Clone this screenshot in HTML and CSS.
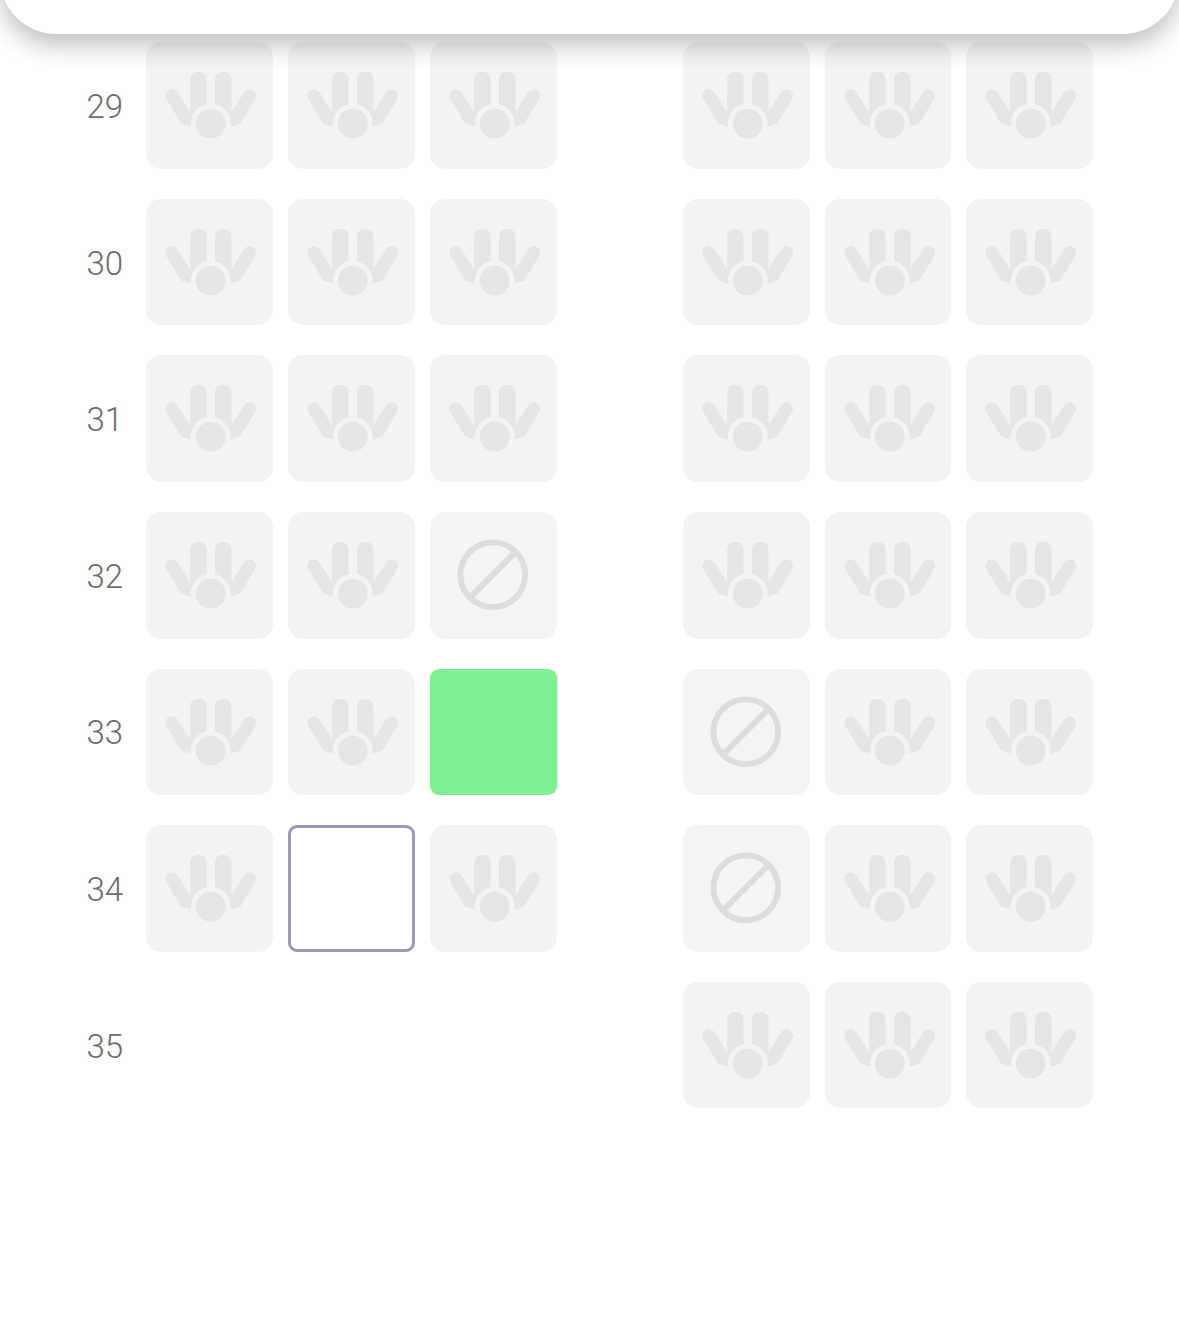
FILE: index.html
```html
<!DOCTYPE html>
<html lang="en">
<head>
    <meta charset="UTF-8">
    <meta name="viewport" content="width=device-width, initial-scale=1.0">
    <title>Seat Map</title>
    <link rel="stylesheet" href="styles.css">
</head>
<body>
    <svg class="icon-defs" width="0" height="0" aria-hidden="true">
        <symbol id="hand" viewBox="0 0 127 127">
            <rect x="44.3" y="30" width="16.5" height="52" rx="7"/>
            <rect x="69.3" y="30" width="16.5" height="52" rx="7"/>
            <path d="M20.5 57.5 A6.5 6.5 0 0 1 31.5 50.5 L46 73 L46 85 L35.5 82 Z"/>
            <path d="M109.5 57.5 A6.5 6.5 0 0 0 98.5 50.5 L84 73 L84 85 L94.5 82 Z"/>
            <circle class="gap" cx="65" cy="82" r="20"/>
            <circle cx="65" cy="82" r="15"/>
        </symbol>
        <symbol id="blocked" viewBox="0 0 127 127">
            <circle class="ring" cx="63" cy="63" r="32.5"/>
            <path class="ring" d="M86 40 L40 86"/>
        </symbol>
    </svg>

    <div class="top-sheet"></div>

    <div class="seat-map">
        <div class="row">
            <span class="row-num">29</span>
            <div class="seats">
                <div class="seat"><svg><use href="#hand"/></svg></div>
                <div class="seat"><svg><use href="#hand"/></svg></div>
                <div class="seat"><svg><use href="#hand"/></svg></div>
            </div>
            <div class="seats">
                <div class="seat"><svg><use href="#hand"/></svg></div>
                <div class="seat"><svg><use href="#hand"/></svg></div>
                <div class="seat"><svg><use href="#hand"/></svg></div>
            </div>
        </div>
        <div class="row">
            <span class="row-num">30</span>
            <div class="seats">
                <div class="seat"><svg><use href="#hand"/></svg></div>
                <div class="seat"><svg><use href="#hand"/></svg></div>
                <div class="seat"><svg><use href="#hand"/></svg></div>
            </div>
            <div class="seats">
                <div class="seat"><svg><use href="#hand"/></svg></div>
                <div class="seat"><svg><use href="#hand"/></svg></div>
                <div class="seat"><svg><use href="#hand"/></svg></div>
            </div>
        </div>
        <div class="row">
            <span class="row-num">31</span>
            <div class="seats">
                <div class="seat"><svg><use href="#hand"/></svg></div>
                <div class="seat"><svg><use href="#hand"/></svg></div>
                <div class="seat"><svg><use href="#hand"/></svg></div>
            </div>
            <div class="seats">
                <div class="seat"><svg><use href="#hand"/></svg></div>
                <div class="seat"><svg><use href="#hand"/></svg></div>
                <div class="seat"><svg><use href="#hand"/></svg></div>
            </div>
        </div>
        <div class="row">
            <span class="row-num">32</span>
            <div class="seats">
                <div class="seat"><svg><use href="#hand"/></svg></div>
                <div class="seat"><svg><use href="#hand"/></svg></div>
                <div class="seat seat-blocked"><svg><use href="#blocked"/></svg></div>
            </div>
            <div class="seats">
                <div class="seat"><svg><use href="#hand"/></svg></div>
                <div class="seat"><svg><use href="#hand"/></svg></div>
                <div class="seat"><svg><use href="#hand"/></svg></div>
            </div>
        </div>
        <div class="row">
            <span class="row-num">33</span>
            <div class="seats">
                <div class="seat"><svg><use href="#hand"/></svg></div>
                <div class="seat"><svg><use href="#hand"/></svg></div>
                <div class="seat seat-selected"></div>
            </div>
            <div class="seats">
                <div class="seat seat-blocked"><svg><use href="#blocked"/></svg></div>
                <div class="seat"><svg><use href="#hand"/></svg></div>
                <div class="seat"><svg><use href="#hand"/></svg></div>
            </div>
        </div>
        <div class="row">
            <span class="row-num">34</span>
            <div class="seats">
                <div class="seat"><svg><use href="#hand"/></svg></div>
                <div class="seat seat-open"></div>
                <div class="seat"><svg><use href="#hand"/></svg></div>
            </div>
            <div class="seats">
                <div class="seat seat-blocked"><svg><use href="#blocked"/></svg></div>
                <div class="seat"><svg><use href="#hand"/></svg></div>
                <div class="seat"><svg><use href="#hand"/></svg></div>
            </div>
        </div>
        <div class="row">
            <span class="row-num">35</span>
            <div class="seats"></div>
            <div class="seats">
                <div class="seat"><svg><use href="#hand"/></svg></div>
                <div class="seat"><svg><use href="#hand"/></svg></div>
                <div class="seat"><svg><use href="#hand"/></svg></div>
            </div>
        </div>
    </div>
</body>
</html>
```

FILE: styles.css
```css
html, body {
    height: 100%;
}
body {
    font-family: Roboto, "Liberation Sans", Arial, sans-serif;
    background-color: #ffffff;
    margin: 0;
    overflow: hidden;
}
.icon-defs {
    position: absolute;
}
.top-sheet {
    position: absolute;
    top: -86px;
    left: 0;
    right: 0;
    height: 120px;
    background: white;
    border-radius: 56px;
    box-shadow: 0 12px 24px rgba(0, 0, 0, 0.24);
    z-index: 2;
}
.seat-map {
    display: flex;
    flex-direction: column;
    gap: 30.1px;
    padding-top: 42.3px;
}
.row {
    display: flex;
    align-items: center;
    height: 126.5px;
}
.row-num {
    flex: none;
    width: 123px;
    margin-right: 23px;
    padding-top: 2px;
    text-align: right;
    font-size: 33px;
    font-weight: 300;
    color: #6c6c6c;
}
.seats {
    flex: none;
    display: flex;
    gap: 15.5px;
    width: 411px;
}
.seats + .seats {
    gap: 15px;
    margin-left: 126px;
}
.seat {
    flex: none;
    width: 126.5px;
    height: 126.5px;
    box-sizing: border-box;
    background: #f3f3f6;
    border-radius: 15px;
}
.seat svg {
    display: block;
    width: 126.5px;
    height: 126.5px;
    fill: #e5e5e8;
    filter: blur(0.6px);
}
.gap {
    fill: #f3f3f6;
}
.ring {
    fill: none;
    stroke: #dcdcdc;
    stroke-width: 6;
}
.seat-blocked {
    background: #f4f4f4;
}
.seat-selected {
    background: #7eef93;
    border-radius: 9px;
}
.seat-open {
    background: white;
    border: 3px solid #9b99b5;
    border-radius: 9px;
}
```
